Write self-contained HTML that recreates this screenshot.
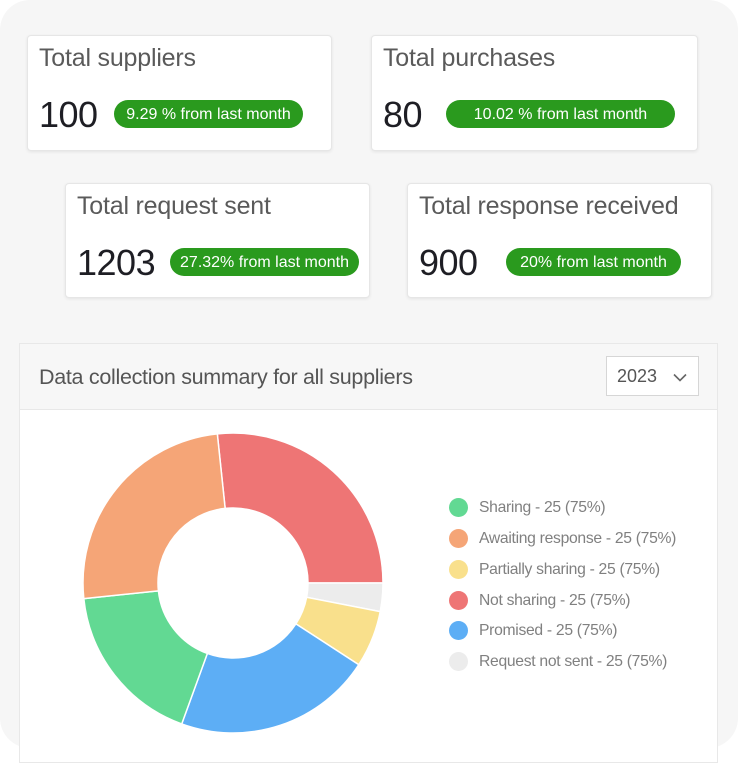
<!DOCTYPE html>
<html><head><meta charset="utf-8"><style>
*{margin:0;padding:0;box-sizing:border-box}
body{width:738px;height:748px;background:#fff;font-family:"Liberation Sans",sans-serif;position:relative;overflow:hidden}
.bg{position:absolute;left:0;top:0;width:738px;height:748px;background:#f6f6f6;border-radius:30px}
.card{position:absolute;background:#fff;border:1px solid #e6e6e6;border-radius:4px;box-shadow:0 1px 3px rgba(0,0,0,.08)}
.card .t{position:absolute;left:11px;top:8px;font-size:25px;color:#5a5a5a;letter-spacing:-.2px}
.card .n{position:absolute;left:11px;top:58px;font-size:36px;color:#1e1e24;letter-spacing:-.5px}
.badge{position:absolute;height:28px;border-radius:14px;background:#2a9a1e;color:#fff;font-size:16px;line-height:26px;padding-top:2px;text-align:center;white-space:nowrap}
.panel{position:absolute;left:19px;top:343px;width:699px;height:420px;background:#fff;border:1px solid #e8e8e8}
.ph{height:66px;background:#f7f7f7;border-bottom:1px solid #e8e8e8;position:relative}
.ph .tt{position:absolute;left:19px;top:21px;font-size:21.5px;color:#555;letter-spacing:-.3px}
.dd{position:absolute;left:586px;top:12px;width:93px;height:40px;background:#fff;border:1px solid #d6d6d6;font-size:18px;color:#555;padding:9px 0 0 10px}
.leg{position:absolute;left:449px;font-size:15.7px;color:#808080;letter-spacing:-.3px}
.leg i{position:absolute;left:0;top:0;width:19px;height:19px;border-radius:50%}
.leg span{position:absolute;left:30px;top:1px;white-space:nowrap}
</style></head><body>
<div class="bg"></div>
<div class="card" style="left:27px;top:35px;width:305px;height:116px"><div class="t">Total suppliers</div><div class="n">100</div><div class="badge" style="left:86px;top:64px;width:189px">9.29 % from last month</div></div>
<div class="card" style="left:371px;top:35px;width:327px;height:116px"><div class="t">Total purchases</div><div class="n">80</div><div class="badge" style="left:74px;top:64px;width:229px">10.02 % from last month</div></div>
<div class="card" style="left:65px;top:183px;width:305px;height:115px"><div class="t">Total request sent</div><div class="n">1203</div><div class="badge" style="left:104px;top:64px;width:189px">27.32% from last month</div></div>
<div class="card" style="left:407px;top:183px;width:305px;height:115px"><div class="t">Total response received</div><div class="n">900</div><div class="badge" style="left:98px;top:64px;width:175px">20% from last month</div></div>
<div class="panel"><div class="ph"><div class="tt">Data collection summary for all suppliers</div>
<div class="dd">2023<svg style="position:absolute;left:66px;top:16px" width="14" height="9" viewBox="0 0 14 9"><path d="M1 1.5L7 7.5L13 1.5" fill="none" stroke="#666" stroke-width="1.6"/></svg></div></div></div>
<svg id="d" style="position:absolute;left:0;top:0" width="738" height="748"></svg>
<div class="leg" style="top:498px"><i style="background:#62d993"></i><span>Sharing - 25 (75%)</span></div>
<div class="leg" style="top:529px"><i style="background:#f5a577"></i><span>Awaiting response - 25 (75%)</span></div>
<div class="leg" style="top:560px"><i style="background:#f9e08c"></i><span>Partially sharing - 25 (75%)</span></div>
<div class="leg" style="top:591px"><i style="background:#ee7575"></i><span>Not sharing - 25 (75%)</span></div>
<div class="leg" style="top:621px"><i style="background:#5daef5"></i><span>Promised - 25 (75%)</span></div>
<div class="leg" style="top:652px"><i style="background:#ececec"></i><span>Request not sent - 25 (75%)</span></div>
<script>
var cx=233,cy=583,R=150,r=75;
var segs=[[-6,90,'#ee7575'],[90,101,'#ececec'],[101,123,'#f9e08c'],[123,200,'#5daef5'],[200,264,'#62d993'],[264,354,'#f5a577']];
function p(a,rad){a=(a-90)*Math.PI/180;return (cx+rad*Math.cos(a)).toFixed(2)+' '+(cy+rad*Math.sin(a)).toFixed(2);}
var h='';
segs.forEach(function(s){var l=(s[1]-s[0])>180?1:0;
h+='<path d="M'+p(s[0],R)+' A'+R+' '+R+' 0 '+l+' 1 '+p(s[1],R)+' L'+p(s[1],r)+' A'+r+' '+r+' 0 '+l+' 0 '+p(s[0],r)+' Z" fill="'+s[2]+'" stroke="#fff" stroke-width="1.5"/>';});
document.getElementById('d').innerHTML=h;
</script>
</body></html>
